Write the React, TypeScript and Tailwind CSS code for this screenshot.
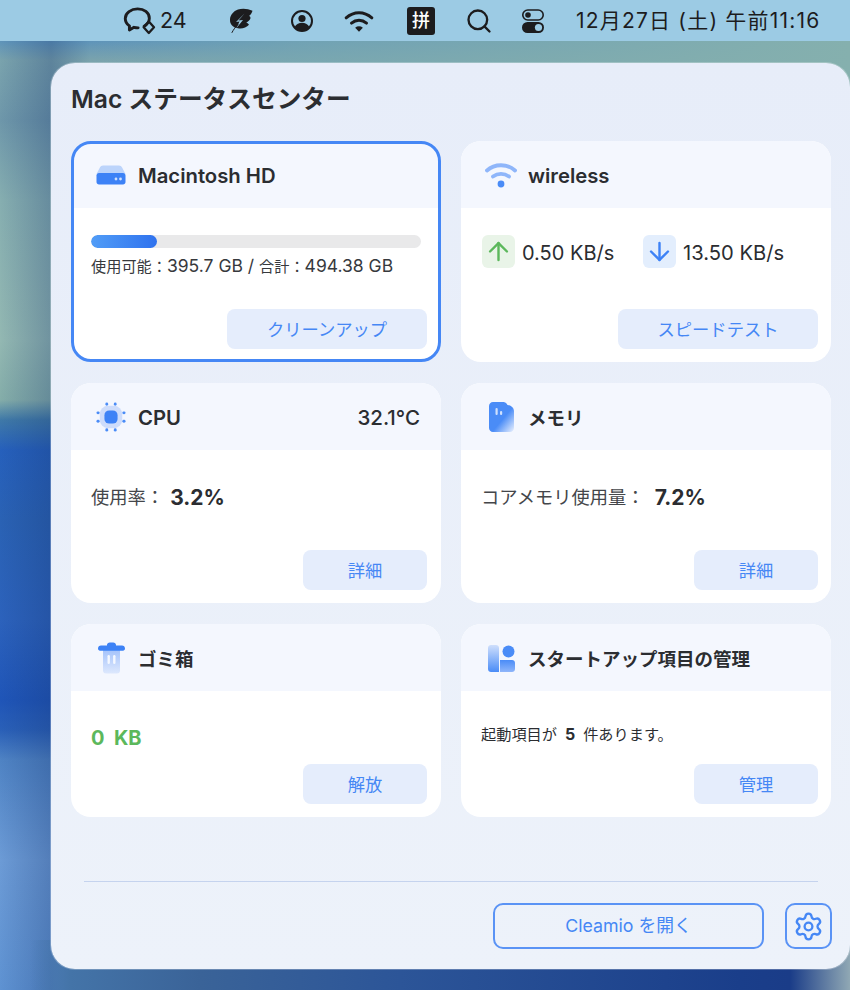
import { type ReactNode } from 'react'
import { ArrowDown, ArrowUp, Search, Settings } from 'lucide-react'

const fontStack = "font-['Inter','Noto_Sans_CJK_JP',sans-serif]"

// -- Menu bar icons ---------------------------------------------------------

function ChatIcon() {
  return (
    <svg width="34" height="28" viewBox="4 4 32 27" fill="none">
      <path
        d="M24 22.500c3.200-1.800 5-4.400 5-7.600C29 9.400 23.900 5.800 17.700 5.800S5.800 9.700 5.800 15c0 3 1.400 5.400 4 7.200v4l4.400-2.600c1.300.3 2.600.5 4 .5"
        stroke="#1c1c1e"
        strokeWidth="2.800"
        strokeLinecap="round"
        strokeLinejoin="round"
      />
      <path d="M28.500 18l5 5.500-5 5.500-5-5.500z" stroke="#1c1c1e" strokeWidth="2.200" strokeLinejoin="round" />
    </svg>
  )
}

function FeatherIcon() {
  return (
    <svg width="24" height="25" viewBox="0 0 24 25" fill="none">
      <path
        d="M9 1.500C13 .2 19 .5 23.500 2.800c-.6 2.200-1.800 3.900-3.500 5.200 1 .4 1.500 1.200 1.500 2.200-.8 2-2.300 3.400-4.200 4.300 1.300.5 2.200 1.200 2.700 2.200-2.500 2.800-6.800 4.200-11 3.500C3.500 19.500.8 16 1 11.500 1.200 7 4.500 3 9 1.500z"
        fill="#1c1c1e"
      />
      <path d="M15.500 5.500L9.500 12.500l4.500-.5-6.500 8 3-6.500-3.500.5z" fill="#9ccbe4" />
      <path d="M3 24.500c1.500-3 3.500-5.500 6-8" stroke="#1c1c1e" strokeWidth="1" strokeLinecap="round" />
    </svg>
  )
}

function UserCircleIcon() {
  return (
    <svg width="24" height="24" viewBox="0 0 24 24" fill="none">
      <circle cx="12" cy="12" r="10" stroke="#1c1c1e" strokeWidth="2" />
      <circle cx="12" cy="9.500" r="3.600" fill="#1c1c1e" />
      <path d="M4.500 18c2-3.200 4.500-4.300 7.500-4.300s5.500 1.100 7.500 4.300c-2 2.600-4.600 3.700-7.500 3.700S6.500 20.600 4.500 18z" fill="#1c1c1e" />
    </svg>
  )
}

function MenuWifiIcon() {
  return (
    <svg width="30" height="24" viewBox="0 0 28 22" fill="none">
      <path d="M2 8c7.200-6.400 16.800-6.400 24 0" stroke="#1c1c1e" strokeWidth="2.800" strokeLinecap="round" />
      <path d="M7 13c4.200-3.600 9.800-3.600 14 0" stroke="#1c1c1e" strokeWidth="2.800" strokeLinecap="round" />
      <path d="M14 21l-3.600-3.800c2.200-1.600 5-1.600 7.200 0z" fill="#1c1c1e" />
    </svg>
  )
}

function ToggleIcon() {
  return (
    <svg width="24" height="26" viewBox="0 0 24 26" fill="none">
      <rect x="1.800" y="2" width="20.400" height="10" rx="5" stroke="#1c1c1e" strokeWidth="1.600" />
      <circle cx="7" cy="7" r="2.800" fill="#1c1c1e" />
      <rect x="1" y="14" width="22" height="11" rx="5.500" fill="#1c1c1e" />
      <circle cx="17.500" cy="19.500" r="3.600" fill="#9ccbe4" />
    </svg>
  )
}

// -- Card header icons ------------------------------------------------------

function DiskIcon() {
  return (
    <svg width="30" height="20" viewBox="0 0 30 20" fill="none">
      <path d="M7 .5h16c1.400 0 2.500.7 3.100 2L29.500 9H.5l3.400-6.500C4.500 1.200 5.600.5 7 .5z" fill="#bcd4fb" />
      <path d="M3 8h24c1.400 0 2.500 1.100 2.500 2.500V17c0 1.400-1.100 2.500-2.500 2.500H3C1.600 19.500.5 18.400.5 17v-6.500C.5 9.100 1.600 8 3 8z" fill="#3d82f6" />
      <circle cx="20" cy="14" r="1.400" fill="#cfe0fd" />
      <circle cx="24.500" cy="14" r="1.400" fill="#cfe0fd" />
    </svg>
  )
}

function WifiCardIcon() {
  return (
    <svg width="32" height="26" viewBox="0 0 32 26" fill="none">
      <path d="M2 8.500C9.500 1.500 22.500 1.500 30 8.500" stroke="#8fb6fa" strokeWidth="3.800" strokeLinecap="round" />
      <path d="M8 14.500c4.800-3.600 11.200-3.600 16 0" stroke="#8fb6fa" strokeWidth="3.800" strokeLinecap="round" />
      <circle cx="16" cy="22" r="3.400" fill="#4a8cf7" />
    </svg>
  )
}

function CpuIcon() {
  return (
    <svg width="30" height="30" viewBox="0 0 32 32" fill="none">
      <rect x="4" y="4" width="24" height="24" rx="9" fill="#cddcfb" />
      <rect x="9" y="9" width="14" height="14" rx="5" fill="#3d82f6" />
      <g fill="#4a8cf7">
        <rect x="10" y="0.500" width="3" height="3.400" rx="1.500" />
        <rect x="19" y="0.500" width="3" height="3.400" rx="1.500" />
        <rect x="10" y="28.100" width="3" height="3.400" rx="1.500" />
        <rect x="19" y="28.100" width="3" height="3.400" rx="1.500" />
        <rect x="0.500" y="10" width="3.400" height="3" rx="1.500" />
        <rect x="0.500" y="19" width="3.400" height="3" rx="1.500" />
        <rect x="28.100" y="10" width="3.400" height="3" rx="1.500" />
        <rect x="28.100" y="19" width="3.400" height="3" rx="1.500" />
      </g>
    </svg>
  )
}

function MemoryIcon() {
  return (
    <svg width="25" height="30" viewBox="0 0 25 30" fill="none">
      <defs>
        <linearGradient id="mem" x1="0.200" y1="0.200" x2="1" y2="1">
          <stop offset="0.450" stopColor="#4a8cf7" />
          <stop offset="1" stopColor="#4a8cf7" stopOpacity="0.050" />
        </linearGradient>
      </defs>
      <path d="M4 0h10c1.500 0 2.500.5 3.500 1.500L18.500 3c4 .5 6.500 3 6.500 6v17c0 2.200-1.800 4-4 4H4c-2.200 0-4-1.800-4-4V4c0-2.200 1.800-4 4-4z" fill="url(#mem)" />
      <rect x="6.500" y="6" width="2.200" height="7" rx="1.100" fill="#cfe0fd" />
      <rect x="11" y="9" width="2.200" height="4" rx="1.100" fill="#cfe0fd" />
    </svg>
  )
}

function TrashIcon() {
  return (
    <svg width="27" height="32" viewBox="0 0 27 32" fill="none">
      <defs>
        <linearGradient id="bin" x1="0" y1="0" x2="0" y2="1">
          <stop offset="0" stopColor="#a5c3fb" />
          <stop offset="1" stopColor="#dde8fd" />
        </linearGradient>
      </defs>
      <path d="M5 8h17v20.500c0 1.700-1.300 3-3 3H8c-1.700 0-3-1.300-3-3z" fill="url(#bin)" />
      <rect x="9.500" y="13" width="2.400" height="9" rx="1.200" fill="#f4f8ff" />
      <rect x="15.100" y="13" width="2.400" height="9" rx="1.200" fill="#f4f8ff" />
      <path d="M9 3c0-1.500 1.300-2.500 2.800-2.500h3.400C16.700.5 18 1.500 18 3v.5h6c1.700 0 3 1.200 3 3 0 1.400-.9 2.200-2 2.200H2C.9 8.700 0 7.900 0 6.500c0-1.800 1.300-3 3-3h6z" fill="#3d82f6" />
    </svg>
  )
}

function StartupIcon() {
  return (
    <svg width="27" height="27" viewBox="0 0 27 27" fill="none">
      <defs>
        <linearGradient id="startA" x1="0" y1="0" x2="0" y2="1">
          <stop offset="0" stopColor="#cfdffc" />
          <stop offset="1" stopColor="#4a8cf7" />
        </linearGradient>
        <linearGradient id="startB" x1="0" y1="0" x2="0" y2="1">
          <stop offset="0" stopColor="#4a8cf7" />
          <stop offset="1" stopColor="#8fb6fa" />
        </linearGradient>
      </defs>
      <path d="M3 0h5c1.700 0 3 1.300 3 3v24H3c-1.700 0-3-1.300-3-3V3c0-1.700 1.300-3 3-3z" fill="url(#startA)" />
      <path d="M12 15h12c1.700 0 3 1.300 3 3v6c0 1.700-1.300 3-3 3H12z" fill="url(#startB)" />
      <circle cx="20.500" cy="6.500" r="6" fill="#4a8cf7" />
    </svg>
  )
}

// -- Card -------------------------------------------------------------------

function Card({
  icon,
  title,
  right,
  action,
  active = false,
  wide = false,
  second = false,
  jp = false,
  children,
}: {
  icon: ReactNode
  title: string
  right?: string
  action: string
  active?: boolean
  wide?: boolean
  second?: boolean
  jp?: boolean
  children: ReactNode
}) {
  return (
    <div
      className={[
        'relative flex flex-col overflow-hidden rounded-[20px] bg-white',
        active ? 'outline-[3px] -outline-offset-[3px] outline-[#4587f5]' : '',
      ].join(' ')}
    >
      <div className="flex h-[67px] shrink-0 items-center bg-[#f4f7fe] pl-5 pr-[21px] pt-px">
        <div className="mr-[7px] flex w-10 shrink-0 items-center justify-center">{icon}</div>
        <span
          className={[
            'flex-1 font-semibold text-[#2b2d31]',
            jp ? 'pt-[4px] text-[18.500px]' : 'pt-[2px] text-[20.300px]',
          ].join(' ')}
        >
          {title}
        </span>
        {right && <span className="pt-[2px] text-[20.500px] font-medium text-[#2b2d31]">{right}</span>}
      </div>
      <div className="flex-1 pl-5 pr-[10px]">{children}</div>
      <div className={['flex justify-end pb-[13px]', second ? 'pr-[13px]' : 'pr-[14px]'].join(' ')}>
        <button
          className={[
            'h-10 rounded-lg bg-[#e5edfc] pt-px text-[17.300px] text-[#4587f5]',
            wide ? 'w-[200px]' : 'w-[124px]',
          ].join(' ')}
        >
          {action}
        </button>
      </div>
    </div>
  )
}

export default function App() {
  return (
    <div
      className={`${fontStack} flex h-[990px] w-[850px] flex-col overflow-hidden [background:linear-gradient(90deg,rgba(68,116,168,0)_30px,#4474a8_70px,#3a6398_200px,#2c5598_400px,#1a3e8a_740px,#1a3c88_790px,#90a8b4_850px)_0_100%/100%_50px_no-repeat,linear-gradient(90deg,rgba(120,168,178,0)_90px,rgba(120,168,178,0.7)_300px,#85b0ae_850px)_0_41px/100%_46px_no-repeat,linear-gradient(90deg,rgba(20,50,110,0)_0px,rgba(20,50,110,0.28)_51px,rgba(20,50,110,0)_90px)_0_0/90px_100%_no-repeat,linear-gradient(180deg,#5d93ba_40px,#7aa3ad_60px,#6e97aa_120px,#86aeb0_200px,#93b8b2_340px,#84ada9_400px,#3f79a8_420px,#2660bc_450px,#2a62b4_520px,#2c62bc_620px,#1f55b8_700px,#2a60b8_730px,#4f83c4_760px,#6c9bd6_860px,#5e92d2_990px)]`}
    >
      {/* Menu bar */}
      <div className="flex h-[41px] shrink-0 items-center bg-[#9ccbe4] pl-[123px] text-[#1c1c1e]">
        <ChatIcon />
        <span className="ml-[3px] w-[69px] text-[21.500px] leading-none">24</span>
        <FeatherIcon />
        <span className="ml-[37px]"><UserCircleIcon /></span>
        <span className="ml-[30px]"><MenuWifiIcon /></span>
        <span className="ml-[33px] flex h-[28px] w-[28px] items-center justify-center rounded-[3px] bg-[#1c1c1e] text-[18px] font-medium leading-none text-white">
          拼
        </span>
        <Search size={28} strokeWidth={2} className="ml-[30px]" />
        <span className="ml-[28px]"><ToggleIcon /></span>
        <span className="ml-[31px] whitespace-nowrap text-[21px] leading-none tracking-[1.200px]">
          12月27日 (土) 午前11:16
        </span>
      </div>

      {/* Panel */}
      <div className="pl-[51px] pt-[22px]">
        <div className="flex h-[906px] w-[799px] flex-col rounded-[24px] bg-[linear-gradient(180deg,#e7edf9_0%,#edf2fa_100%)] pl-5 shadow-[0_0_0_1px_rgba(255,255,255,0.25)]">
          <h1 className="flex h-[78px] shrink-0 items-center pb-[4px] text-[24.700px] font-semibold text-[#2b2d31]">
            Mac ステータスセンター
          </h1>

          <div className="grid w-[760px] grid-cols-[370px_370px] grid-rows-[221px_220px_193px] gap-x-5 gap-y-[21px] text-[#2b2d31]">
            <Card active wide icon={<DiskIcon />} title="Macintosh HD" action="クリーンアップ">
              <div className="mt-[27px] h-[13px] w-[330px] overflow-hidden rounded-full bg-[#e9e9ea]">
                <div className="h-full w-[66px] rounded-full bg-[linear-gradient(90deg,#519df7,#2f72ee)]" />
              </div>
              <p className="mt-[6px] whitespace-nowrap text-[15.200px] leading-[24px] text-[#37393d]">
                使用可能：<span className="text-[17.500px]">395.7 GB / </span>合計：<span className="text-[17.500px]">494.38 GB</span>
              </p>
            </Card>

            <Card wide second icon={<WifiCardIcon />} title="wireless" action="スピードテスト">
              <div className="mt-[27px] flex items-center pl-px">
                <span className="flex h-[33px] w-[33px] items-center justify-center rounded-md bg-[#e9f4e8]">
                  <ArrowUp size={29} strokeWidth={2} className="text-[#5cb85c]" />
                </span>
                <span className="ml-[7px] w-[121px] pt-[3px] text-[20px]">0.50 KB/s</span>
                <span className="flex h-[33px] w-[33px] items-center justify-center rounded-md bg-[#e3eefd]">
                  <ArrowDown size={29} strokeWidth={2} className="text-[#3d82f6]" />
                </span>
                <span className="ml-[7px] pt-[3px] text-[20.200px]">13.50 KB/s</span>
              </div>
            </Card>

            <Card icon={<CpuIcon />} title="CPU" right="32.1°C" action="詳細">
              <p className="mt-[33px] flex h-[30px] items-center text-[18.300px] text-[#44464a]">
                使用率：
                <b className="ml-[6px] text-[21px] font-bold text-[#2b2d31]">3.2%</b>
              </p>
            </Card>

            <Card second jp icon={<MemoryIcon />} title="メモリ" action="詳細">
              <p className="mt-[33px] flex h-[30px] items-center text-[18.300px] text-[#44464a]">
                コアメモリ使用量：
                <b className="ml-[10px] text-[21px] font-bold text-[#2b2d31]">7.2%</b>
              </p>
            </Card>

            <Card jp icon={<TrashIcon />} title="ゴミ箱" action="解放">
              <p className="mt-[32px] whitespace-pre text-[20px] font-bold leading-[30px] text-[#5cb85c]">0  KB</p>
            </Card>

            <Card second jp icon={<StartupIcon />} title="スタートアップ項目の管理" action="管理">
              <p className="mt-[32px] whitespace-nowrap text-[15.200px] leading-[22px] text-[#2b2d31]">
                起動項目が<b className="mx-[8px] text-[16px] font-bold">5</b>件あります。
              </p>
            </Card>
          </div>

          <div className="ml-[13px] mt-[64px] h-px w-[734px] bg-[#c5d3ee]" />

          <div className="ml-[422px] mt-[21px] flex gap-[21px]">
            <button className="h-[46px] w-[271px] shrink-0 rounded-[10px] border-2 border-[#5a93f5] pt-px text-[17.800px] text-[#4587f5]">
              Cleamio を開く
            </button>
            <button className="flex h-[46px] w-[47px] shrink-0 items-center justify-center rounded-[10px] border-2 border-[#5a93f5] text-[#4587f5]">
              <Settings size={31} strokeWidth={1.800} />
            </button>
          </div>
        </div>
      </div>
    </div>
  )
}
